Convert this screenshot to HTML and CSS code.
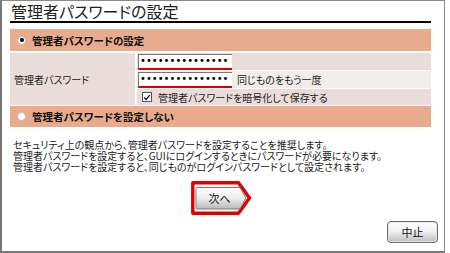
FILE: index.html
```html
<!DOCTYPE html>
<html lang="ja">
<head>
<meta charset="utf-8">
<link rel="stylesheet" href="styles.css">
</head>
<body>
<div class="frame">
  <h1 class="title">管理者パスワードの設定</h1>
  <div class="bar bar-top"><span class="radio checked"></span><span class="bar-label">管理者パスワードの設定</span></div>
  <div class="grid">
    <div class="label-cell">管理者パスワード</div>
    <div class="cell cell-1"><div class="pw">•••••••••••••••</div></div>
    <div class="cell cell-2"><div class="pw">•••••••••••••••</div><span class="hint">同じものをもう一度</span></div>
    <div class="cell cell-3"><span class="check"><svg width="9" height="9" viewBox="0 0 9 9"><path d="M1.5 4.5 L3.5 6.8 L7.5 1.8" fill="none" stroke="#000" stroke-width="1.4"/></svg></span><span class="check-label">管理者パスワードを暗号化して保存する</span></div>
  </div>
  <div class="bar bar-bottom"><span class="radio"></span><span class="bar-label">管理者パスワードを設定しない</span></div>
  <p class="note">セキュリティ上の観点から、管理者パスワードを設定することを推奨します。<br>管理者パスワードを設定すると、GUIにログインするときにパスワードが必要になります。<br>管理者パスワードを設定すると、同じものがログインパスワードとして設定されます。</p>
  <div class="next-row">
    <div class="next">
      <svg class="next-shape" width="62" height="34" viewBox="0 0 62 34">
        <defs>
          <linearGradient id="g" x1="0" y1="0" x2="0" y2="1">
            <stop offset="0" stop-color="#ffffff"/>
            <stop offset="0.5" stop-color="#eeeeee"/>
            <stop offset="1" stop-color="#b8b8b8"/>
          </linearGradient>
        </defs>
        <path d="M1.8 1.8 H47.5 L58.5 17 L47.5 32.2 H1.8 Z" fill="#fff" stroke="#e00000" stroke-width="3.4" stroke-linejoin="round"/>
        <path d="M6 6.5 Q5 6.5 5 7.5 V27 Q5 28 6 28 H49 L55 17 L49 6.5 Z" fill="url(#g)" stroke="#7a7a7a" stroke-width="1"/>
      </svg>
      <span class="next-text">次へ</span>
    </div>
  </div>
  <div class="cancel-row">
    <div class="cancel">中止</div>
  </div>
</div>
</body>
</html>
```
FILE: styles.css
```css
* { box-sizing: border-box; }
html, body { margin: 0; padding: 0; background: #fff; }
body {
  width: 450px;
  height: 253px;
  overflow: hidden;
  font-family: "Noto Sans CJK JP", sans-serif;
  font-feature-settings: "palt";
  color: #1a1a1a;
}
.frame {
  width: 445px;
  height: 253px;
  border: 1px solid #8a8a8a;
  border-left: 2px solid #777;
  border-bottom: 2px solid #7a7a7a;
  padding: 0 13px 0 8px;
  display: flex;
  flex-direction: column;
}
.title {
  margin: 0;
  padding: 1px 0 0 1px;
  font-size: 16px;
  font-weight: normal;
  line-height: 19px;
  height: 22px;
  border-bottom: 2px solid #000;
  color: #222;
}
.bar {
  background: #e8ab8d;
  height: 22px;
  display: flex;
  align-items: center;
  padding-left: 7px;
}
.bar-top { margin-top: 6px; }
.bar-bottom { margin-top: 1px; height: 21px; }
.radio {
  width: 9px;
  height: 9px;
  border-radius: 50%;
  background: #fff;
  border: 1px solid #bbb;
  display: flex;
  align-items: center;
  justify-content: center;
}
.radio.checked::after {
  content: "";
  width: 4px;
  height: 4px;
  border-radius: 50%;
  background: #000;
}
.bar-label {
  margin-left: 6px;
  font-size: 10.5px;
  font-weight: bold;
  color: #111;
}
.grid {
  margin-top: 2px;
  display: grid;
  grid-template-columns: 125px 1fr;
  grid-template-rows: 17px 17px 16px;
  column-gap: 2px;
  row-gap: 1px;
}
.label-cell {
  grid-row: 1 / 4;
  background: #eaddd9;
  font-size: 10px;
  display: flex;
  align-items: center;
  padding-left: 4px;
  color: #222;
}
.cell {
  display: flex;
  align-items: center;
  font-size: 10px;
  color: #222;
}
.cell-1 { background: #eaddd9; }
.cell-2 { background: #f4ece9; }
.cell-3 { background: #eaddd9; padding-left: 5px; }
.pw {
  width: 94px;
  height: 16px;
  margin-left: 1px;
  background: #fff;
  border-top: 1px solid #777;
  border-left: 1px solid #777;
  border-bottom: 2px solid #e00000;
  font-family: "DejaVu Sans", sans-serif;
  font-size: 10px;
  line-height: 12px;
  padding-left: 1px;
  color: #000;
  white-space: nowrap;
}
.hint { margin-left: 5px; }
.check {
  width: 10px;
  height: 10px;
  border: 1px solid #555;
  background: #fff;
  display: flex;
  align-items: center;
  justify-content: center;
}
.check-label { margin-left: 6px; }
.note {
  margin: 12px 0 0 3px;
  font-size: 10px;
  line-height: 11px;
  white-space: nowrap;
  color: #222;
}
.next-row {
  margin-top: 9px;
  display: flex;
  justify-content: center;
  padding-left: 2px;
}
.next {
  position: relative;
  width: 62px;
  height: 34px;
}
.next-shape { position: absolute; left: 0; top: 0; }
.next-text {
  position: absolute;
  left: 14px;
  top: 10px;
  width: 30px;
  text-align: center;
  font-size: 11px;
  line-height: 14px;
  color: #111;
}
.cancel-row {
  margin-top: 6px;
  margin-right: -7px;
  display: flex;
  justify-content: flex-end;
}
.cancel {
  width: 51px;
  height: 22px;
  border: 1px solid #6a6a6a;
  border-radius: 4px;
  background: linear-gradient(#ffffff 0%, #f2f2f2 45%, #bdbdbd 100%);
  box-shadow: inset 0 0 0 1px #e8e8e8;
  font-size: 11px;
  display: flex;
  align-items: center;
  justify-content: center;
  color: #111;
}
```
